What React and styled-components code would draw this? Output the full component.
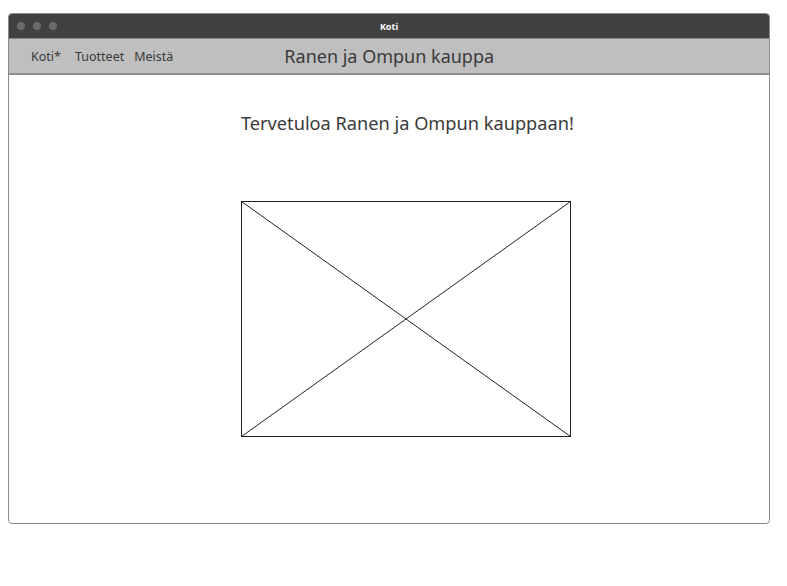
import React from "react";
import styled, { createGlobalStyle } from "styled-components";

const Global = createGlobalStyle`
  html, body { margin: 0; padding: 0; background: #fff; }
  body { font-family: "Noto Sans", "Liberation Sans", sans-serif; }
`;

const Page = styled.div`
  padding: 13px 16px 0 8px;
`;

const Window = styled.div`
  width: 762px;
  height: 511px;
  box-sizing: border-box;
  border: 1px solid #8a8a8a;
  border-radius: 4px;
  overflow: hidden;
  display: flex;
  flex-direction: column;
`;

const TitleBar = styled.div`
  height: 24px;
  background: #414141;
  display: flex;
  align-items: center;
  position: relative;
  padding-left: 8px;
  gap: 8px;
`;

const Dot = styled.span`
  width: 8px;
  height: 8px;
  border-radius: 50%;
  background: #6a6a6a;
`;

const TitleText = styled.div`
  position: absolute;
  left: 0;
  right: 0;
  text-align: center;
  color: #fff;
  font-size: 9px;
  font-weight: 700;
`;

const NavBar = styled.div`
  height: 37px;
  box-sizing: border-box;
  background: #bfbfbf;
  border-top: 1px solid #8a8a8a;
  border-bottom: 2px solid #8f8f8f;
  display: flex;
  align-items: center;
  padding-left: 22px;
  color: #3a3a3a;
`;

const NavLink = styled.span`
  font-size: 12.5px;
  margin-right: ${(p) => p.$gap}px;
`;

const Brand = styled.span`
  font-size: 18px;
  margin-left: 111px;
  color: #3a3a3a;
`;

const Content = styled.div`
  flex: 1;
  display: flex;
  flex-direction: column;
  align-items: flex-start;
  padding-left: 232px;
`;

const Heading = styled.h1`
  margin: 36px 0 0 0;
  font-size: 18.2px;
  font-weight: 400;
  color: #3a3a3a;
`;

const Placeholder = styled.svg`
  margin-top: 66px;
  display: block;
`;

export default function App() {
  return (
    <>
      <Global />
      <Page>
        <Window>
          <TitleBar>
            <Dot />
            <Dot />
            <Dot />
            <TitleText>Koti</TitleText>
          </TitleBar>
          <NavBar>
            <NavLink $gap={14}>Koti*</NavLink>
            <NavLink $gap={10}>Tuotteet</NavLink>
            <NavLink $gap={0}>Meistä</NavLink>
            <Brand>Ranen ja Ompun kauppa</Brand>
          </NavBar>
          <Content>
            <Heading>Tervetuloa Ranen ja Ompun kauppaan!</Heading>
            <Placeholder width="331" height="236" viewBox="0 0 331 236">
              <rect x="0.5" y="0.5" width="329" height="235" fill="#fff" stroke="#222" strokeWidth="1" />
              <line x1="0.5" y1="0.5" x2="329.5" y2="235.5" stroke="#222" strokeWidth="1" />
              <line x1="329.5" y1="0.5" x2="0.5" y2="235.5" stroke="#222" strokeWidth="1" />
            </Placeholder>
          </Content>
        </Window>
      </Page>
    </>
  );
}
